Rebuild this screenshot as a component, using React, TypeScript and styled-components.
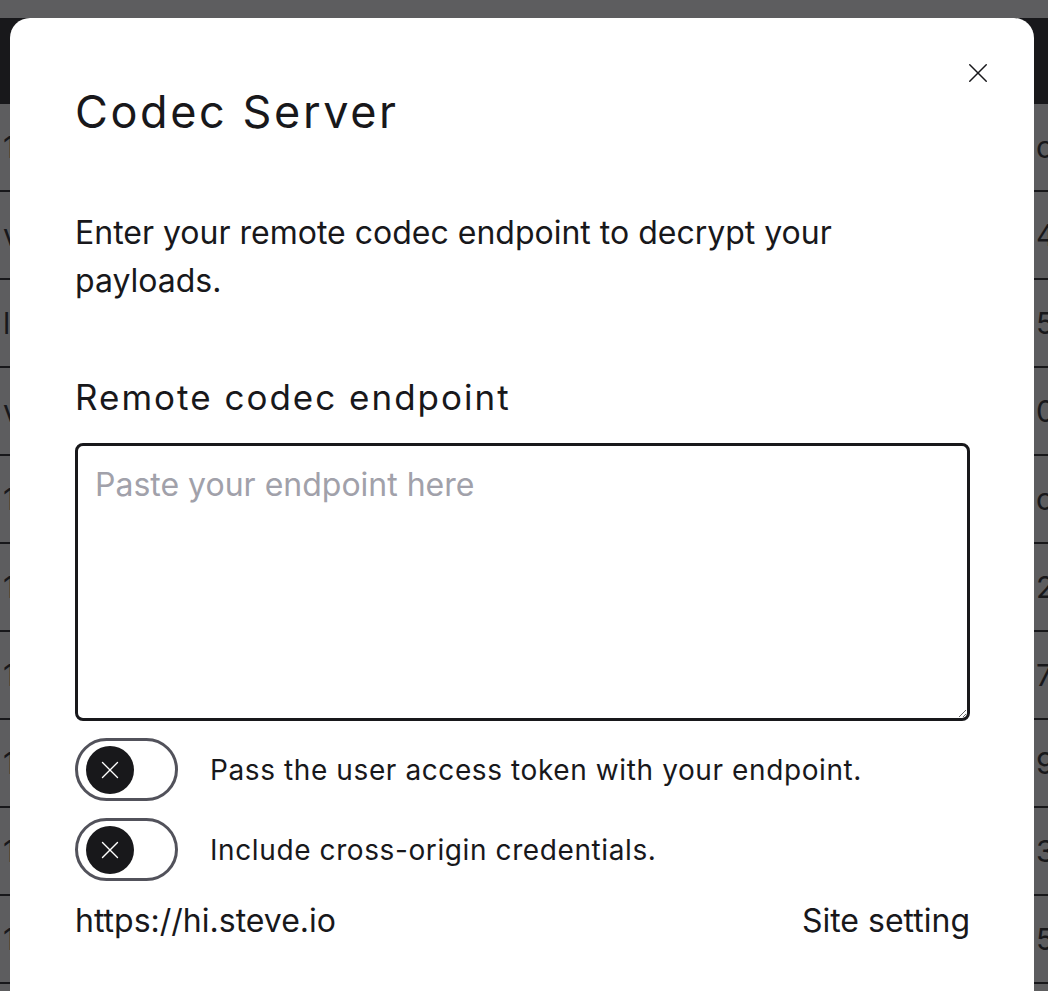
import styled, { createGlobalStyle } from 'styled-components';

const GlobalStyle = createGlobalStyle`
  html, body {
    margin: 0;
    padding: 0;
    background: #ffffff;
    overflow: hidden;
  }
  * {
    box-sizing: border-box;
  }
`;

const rows = [
  { left: '1', right: 'c' },
  { left: 'v', right: '4b' },
  { left: 'l', right: '5' },
  { left: 'v', right: '04' },
  { left: '1', right: 'c3' },
  { left: '1', right: '29' },
  { left: '1', right: '7b' },
  { left: '1', right: '97' },
  { left: '1', right: '3e' },
  { left: '1', right: '5a' },
];

function CloseIcon({ size, color }: { size: number; color: string }) {
  return (
    <svg width={size} height={size} viewBox="0 0 24 24" fill="none" stroke={color} strokeWidth={1.6} strokeLinecap="round">
      <path d="M3 3L21 21" />
      <path d="M21 3L3 21" />
    </svg>
  );
}

function Toggle() {
  return (
    <Track>
      <Knob>
        <CloseIcon size={20} color="#ffffff" />
      </Knob>
    </Track>
  );
}

export default function App() {
  return (
    <>
      <GlobalStyle />
      <Page>
        <TopStrip />
        <Header />
        {rows.map((row, i) => (
          <Row key={i}>
            <Cell>{row.left}</Cell>
            <Cell>{row.right}</Cell>
          </Row>
        ))}
      </Page>
      <Overlay />
      <Modal>
        <CloseButton aria-label="Close">
          <CloseIcon size={22} color="#18181b" />
        </CloseButton>
        <Title>Codec Server</Title>
        <Description>Enter your remote codec endpoint to decrypt your payloads.</Description>
        <FieldLabel htmlFor="endpoint">Remote codec endpoint</FieldLabel>
        <EndpointInput id="endpoint" placeholder="Paste your endpoint here" />
        <ToggleRow>
          <Toggle />
          <ToggleLabel>Pass the user access token with your endpoint.</ToggleLabel>
        </ToggleRow>
        <ToggleRow>
          <Toggle />
          <ToggleLabel>Include cross-origin credentials.</ToggleLabel>
        </ToggleRow>
        <Footer>
          <span>https://hi.steve.io</span>
          <span>Site setting</span>
        </Footer>
      </Modal>
    </>
  );
}

const Page = styled.div`
  width: 1048px;
  height: 991px;
  display: flex;
  flex-direction: column;
  font-family: Inter, 'Liberation Sans', sans-serif;
`;

const TopStrip = styled.div`
  height: 18px;
  flex-shrink: 0;
  background: #ffffff;
`;

const Header = styled.div`
  height: 86px;
  flex-shrink: 0;
  background: #18181b;
`;

const Row = styled.div`
  height: 88px;
  flex-shrink: 0;
  display: flex;
  align-items: center;
  justify-content: space-between;
  padding: 0 0 0 3px;
  border-bottom: 2px solid #18181b;
`;

const Cell = styled.span`
  font-size: 30px;
  color: #18181b;
  white-space: nowrap;
  width: 12px;
`;

const Overlay = styled.div`
  position: fixed;
  inset: 0;
  background: rgba(24, 24, 27, 0.7);
`;

const Modal = styled.div`
  position: fixed;
  left: 10px;
  top: 18px;
  width: 1024px;
  height: 1000px;
  background: #ffffff;
  border-radius: 20px;
  padding: 66px 64px 0 65px;
  display: flex;
  flex-direction: column;
  color: #18181b;
`;

const CloseButton = styled.button`
  position: absolute;
  top: 35px;
  right: 36px;
  width: 40px;
  height: 40px;
  display: flex;
  align-items: center;
  justify-content: center;
  padding: 0;
  border: none;
  background: transparent;
  cursor: pointer;
`;

const Title = styled.h1`
  margin: 0;
  font-family: Inter, 'Liberation Sans', sans-serif;
  font-weight: 400;
  font-size: 45px;
  line-height: 56px;
  letter-spacing: 2.6px;
`;

const Description = styled.p`
  margin: 69px 0 0;
  font-family: Inter, 'Liberation Sans', sans-serif;
  font-size: 32px;
  line-height: 48px;
  max-width: 895px;
`;

const FieldLabel = styled.label`
  margin-top: 70px;
  font-family: Inter, 'Liberation Sans', sans-serif;
  font-size: 35px;
  line-height: 44px;
  letter-spacing: 2px;
`;

const EndpointInput = styled.textarea`
  margin-top: 24px;
  width: 895px;
  height: 278px;
  border: 3px solid #18181b;
  border-radius: 8px;
  padding: 16px 17px;
  font-family: Inter, 'Liberation Sans', sans-serif;
  font-size: 32px;
  line-height: 45px;
  color: #18181b;
  outline: none;

  &::placeholder {
    color: #a1a1aa;
  }
`;

const ToggleRow = styled.div`
  margin-top: 17px;
  display: flex;
  align-items: center;
  gap: 32px;
`;

const Track = styled.div`
  width: 103px;
  height: 63px;
  border: 3px solid #52525b;
  border-radius: 999px;
  display: flex;
  align-items: center;
  padding-left: 8px;
  flex-shrink: 0;
`;

const Knob = styled.div`
  width: 48px;
  height: 48px;
  border-radius: 50%;
  background: #18181b;
  display: flex;
  align-items: center;
  justify-content: center;
`;

const ToggleLabel = styled.span`
  font-family: Inter, 'Liberation Sans', sans-serif;
  font-size: 28px;
  line-height: 40px;
  letter-spacing: 0.6px;
`;

const Footer = styled.div`
  margin-top: 20px;
  width: 895px;
  display: flex;
  justify-content: space-between;
  font-family: Inter, 'Liberation Sans', sans-serif;
  font-size: 32px;
  line-height: 40px;
`;
